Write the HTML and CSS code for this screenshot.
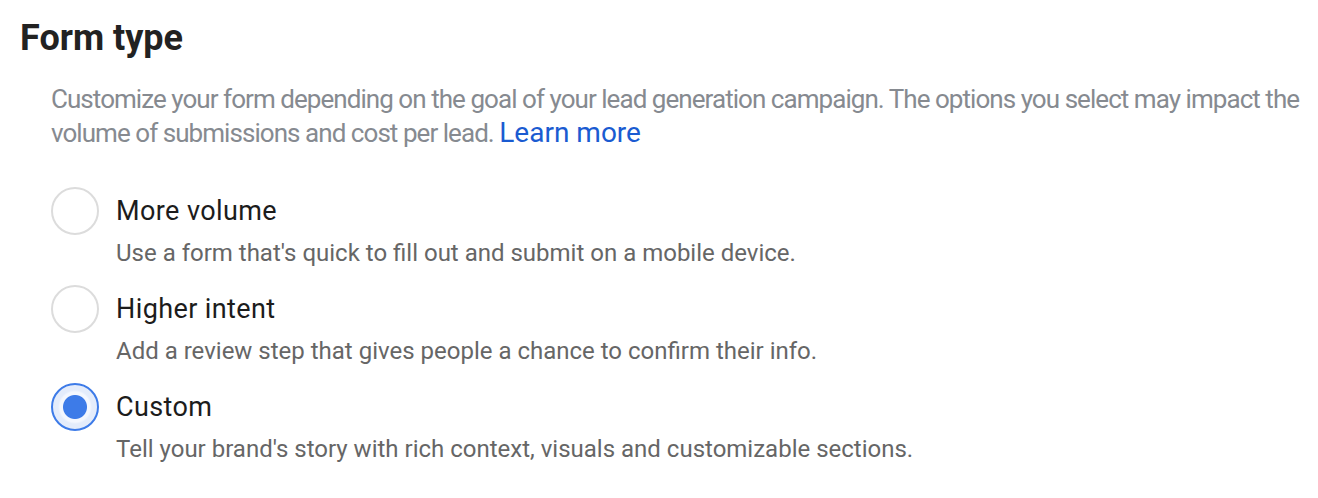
FILE: index.html
```html
<!DOCTYPE html>
<html lang="en">
<head>
    <meta charset="UTF-8">
    <title>Form type</title>
    <link rel="stylesheet" href="styles.css">
</head>
<body>
    <div class="form-type">
        <h2>Form type</h2>
        <p class="intro">Customize your form depending on the goal of your lead generation campaign. The options you select may impact the volume of submissions and cost per lead. <a href="#">Learn more</a></p>

        <label class="option">
            <span class="radio"></span>
            <span class="text">
                <span class="title">More volume</span>
                <span class="desc">Use a form that's quick to fill out and submit on a mobile device.</span>
            </span>
        </label>
        <label class="option">
            <span class="radio"></span>
            <span class="text">
                <span class="title">Higher intent</span>
                <span class="desc">Add a review step that gives people a chance to confirm their info.</span>
            </span>
        </label>
        <label class="option checked">
            <span class="radio"></span>
            <span class="text">
                <span class="title">Custom</span>
                <span class="desc">Tell your brand's story with rich context, visuals and customizable sections.</span>
            </span>
        </label>
    </div>
</body>
</html>
```

FILE: styles.css
```css
* {
    box-sizing: border-box;
}

body {
    margin: 0;
    background-color: #fff;
    font-family: Roboto, "Liberation Sans", sans-serif;
}

.form-type {
    padding: 16px 0 0 20px;
    width: 1310px;
}

.form-type h2 {
    margin: 0;
    font-size: 36px;
    font-weight: bold;
    color: #222;
    line-height: 44px;
}

.intro {
    margin: 22px 0 37px 31px;
    font-size: 26px;
    letter-spacing: -0.95px;
    line-height: 34px;
    color: #868a90;
}

.intro a {
    display: inline-block;
    color: #1a5bd1;
    text-decoration: none;
    font-size: 28px;
    line-height: 28px;
    letter-spacing: 0;
}

.option {
    display: flex;
    align-items: flex-start;
    margin-left: 31px;
    margin-bottom: 16px;
    cursor: pointer;
}

.radio {
    flex: none;
    width: 48px;
    height: 48px;
    border: 2px solid #dcdcdc;
    border-radius: 50%;
    margin-right: 17px;
}

.option.checked .radio {
    border-color: #3d7be8;
    background: radial-gradient(circle, #3d7be8 0 11.5px, #f4f7fe 12.5px 15px, #e4ecfb 17px 100%);
}

.text {
    display: flex;
    flex-direction: column;
}

.title {
    font-size: 27px;
    letter-spacing: 0.4px;
    line-height: 48px;
    color: #1c1c1c;
}

.desc {
    padding-top: 2px;
    font-size: 24px;
    line-height: 32px;
    color: #666;
}
```
